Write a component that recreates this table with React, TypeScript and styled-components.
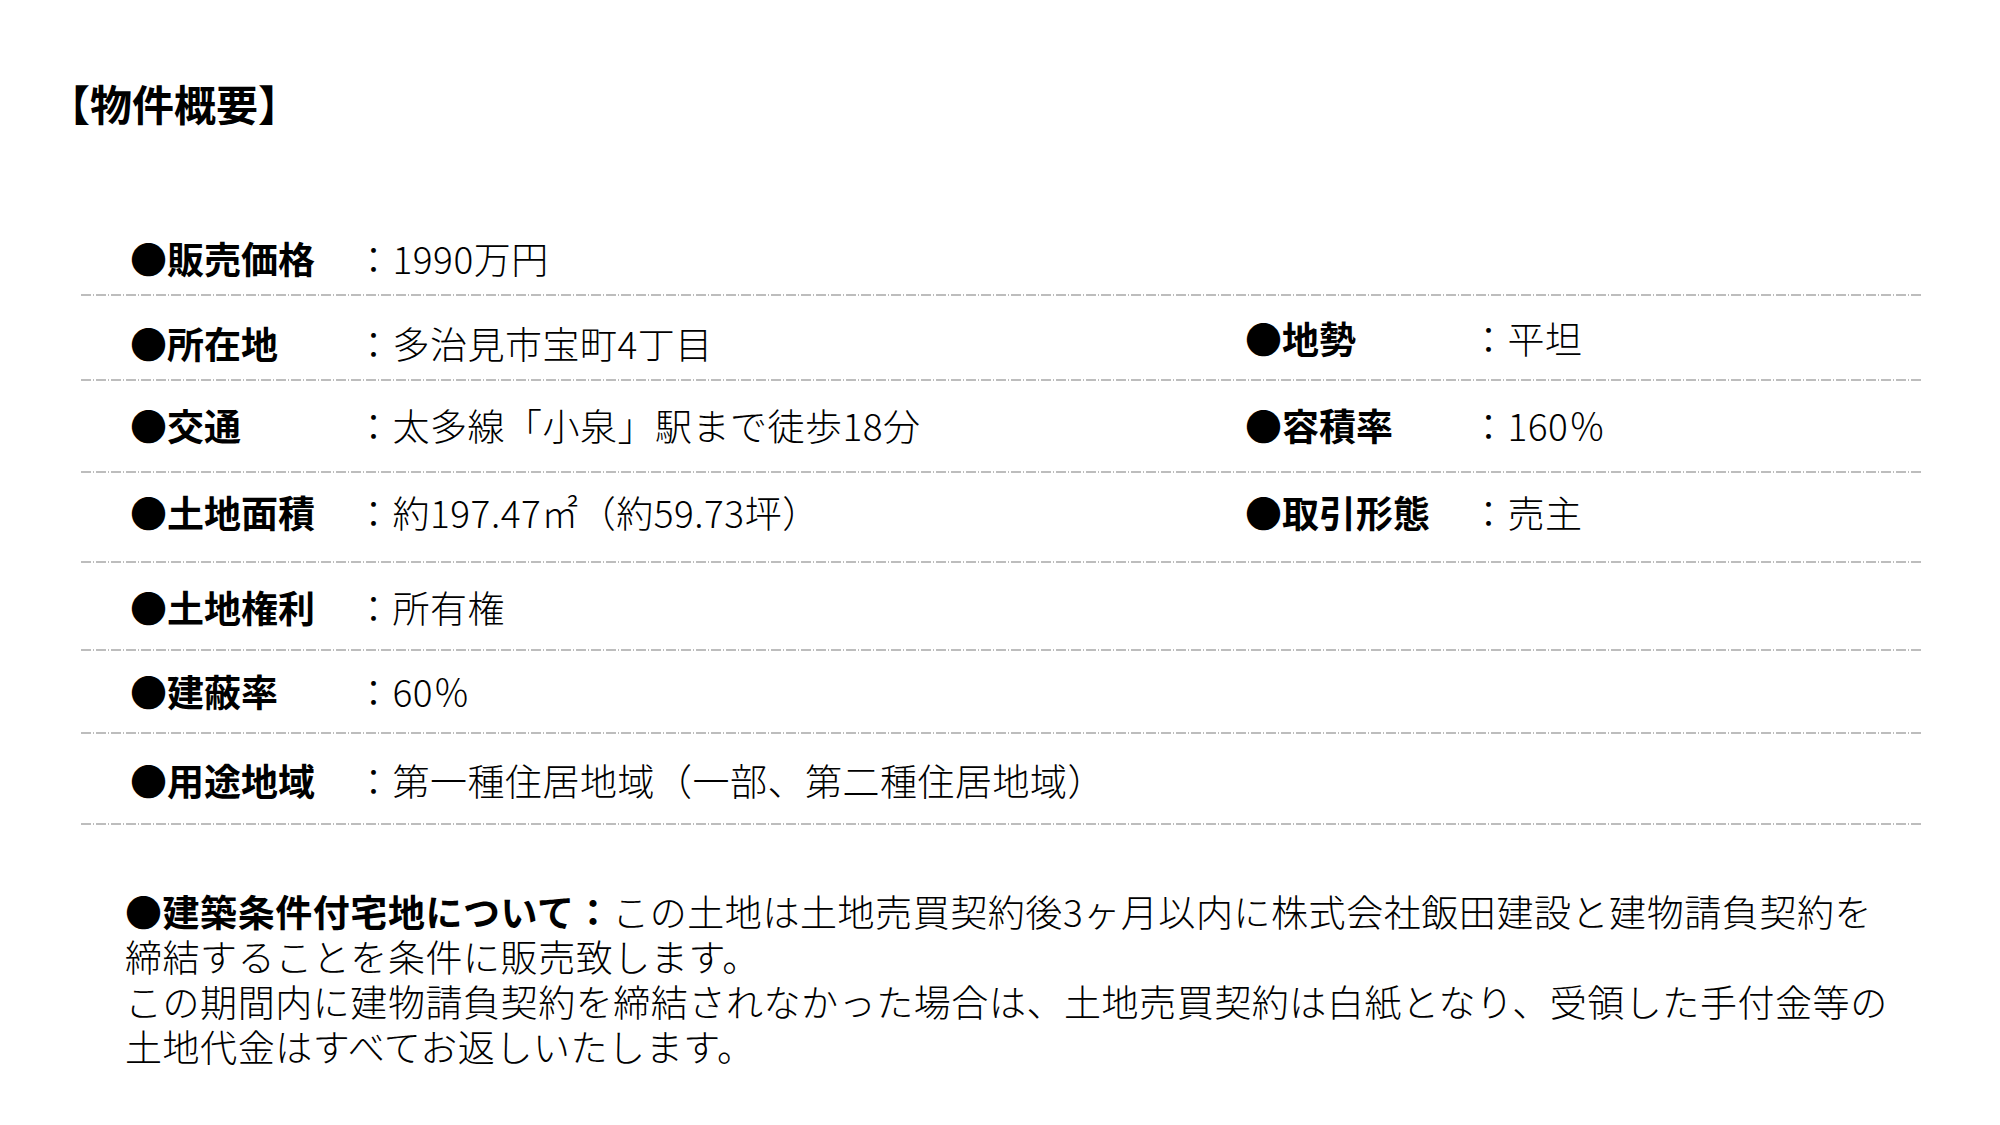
import styled, { createGlobalStyle } from 'styled-components';

interface Item {
  label: string;
  value: string;
  lift?: number;
}

interface RowData {
  height: number;
  top: number;
  left: Item;
  right?: Item;
}

const ROWS: RowData[] = [
  { height: 86, top: 26, left: { label: '●販売価格', value: '：1990万円' } },
  {
    height: 85,
    top: 25,
    left: { label: '●所在地', value: '：多治見市宝町4丁目' },
    right: { label: '●地勢', value: '：平坦', lift: 5 },
  },
  {
    height: 92,
    top: 22,
    left: { label: '●交通', value: '：太多線「小泉」駅まで徒歩18分' },
    right: { label: '●容積率', value: '：160％' },
  },
  {
    height: 90,
    top: 17,
    left: { label: '●土地面積', value: '：約197.47㎡（約59.73坪）' },
    right: { label: '●取引形態', value: '：売主' },
  },
  { height: 88, top: 22, left: { label: '●土地権利', value: '：所有権' } },
  { height: 83, top: 18, left: { label: '●建蔽率', value: '：60％' } },
  { height: 91, top: 24, left: { label: '●用途地域', value: '：第一種住居地域（一部、第二種住居地域）' } },
];

const GlobalStyle = createGlobalStyle`
  html, body {
    margin: 0;
    padding: 0;
    background: #fff;
  }
  body {
    font-family: "Noto Sans CJK JP", "Noto Sans", sans-serif;
    color: #000;
  }
`;

function Cell({ item }: { item: Item }) {
  return (
    <S.Cell $lift={item.lift ?? 0}>
      <S.Label>{item.label}</S.Label>
      <S.Value>{item.value}</S.Value>
    </S.Cell>
  );
}

export default function App() {
  return (
    <S.Page>
      <GlobalStyle />
      <S.Title>【物件概要】</S.Title>
      <S.Table>
        {ROWS.map(row => (
          <S.Row key={row.left.label} $height={row.height} $top={row.top}>
            <Cell item={row.left} />
            {row.right && <Cell item={row.right} />}
          </S.Row>
        ))}
      </S.Table>
      <S.Note>
        <S.NoteLine>
          <S.NoteHead>●建築条件付宅地について：</S.NoteHead>
          この土地は土地売買契約後3ヶ月以内に株式会社飯田建設と建物請負契約を
        </S.NoteLine>
        <S.NoteLine>締結することを条件に販売致します。</S.NoteLine>
        <S.NoteLine>この期間内に建物請負契約を締結されなかった場合は、土地売買契約は白紙となり、受領した手付金等の</S.NoteLine>
        <S.NoteLine>土地代金はすべてお返しいたします。</S.NoteLine>
      </S.Note>
    </S.Page>
  );
}

const S = {
  Page: styled.div`
    width: 2000px;
    padding-top: 79px;
  `,

  Title: styled.h1`
    margin: 0 0 0 48px;
    font-size: 42px;
    line-height: 48px;
    font-weight: 700;
  `,

  Table: styled.div`
    width: 1841px;
    margin: 83px 0 0 81px;
  `,

  Row: styled.div<{ $height: number; $top: number }>`
    display: grid;
    grid-template-columns: 1115px 1fr;
    align-items: start;
    height: ${p => p.$height}px;
    padding: ${p => p.$top}px 0 0 49px;
    box-sizing: border-box;
    background-image: repeating-linear-gradient(
      to right,
      #bdbdbd 0 10px,
      transparent 10px 12px,
      #bdbdbd 12px 13px,
      transparent 13px 15px
    );
    background-size: 100% 2px;
    background-position: left bottom;
    background-repeat: no-repeat;
  `,

  Cell: styled.div<{ $lift: number }>`
    display: flex;
    align-items: center;
    margin-top: ${p => -p.$lift}px;
    font-size: 37px;
    line-height: 44px;
    white-space: nowrap;
  `,

  Label: styled.span`
    width: 225px;
    flex-shrink: 0;
    font-weight: 700;
  `,

  Value: styled.span`
    font-weight: 300;
    letter-spacing: 0.5px;
  `,

  Note: styled.div`
    display: flex;
    flex-direction: column;
    margin: 64px 0 0 125px;
    font-size: 37px;
    letter-spacing: 0.56px;
    font-weight: 300;
  `,

  NoteLine: styled.div`
    height: 45px;
    line-height: 45px;
    white-space: nowrap;
  `,

  NoteHead: styled.strong`
    font-weight: 700;
  `,
};
